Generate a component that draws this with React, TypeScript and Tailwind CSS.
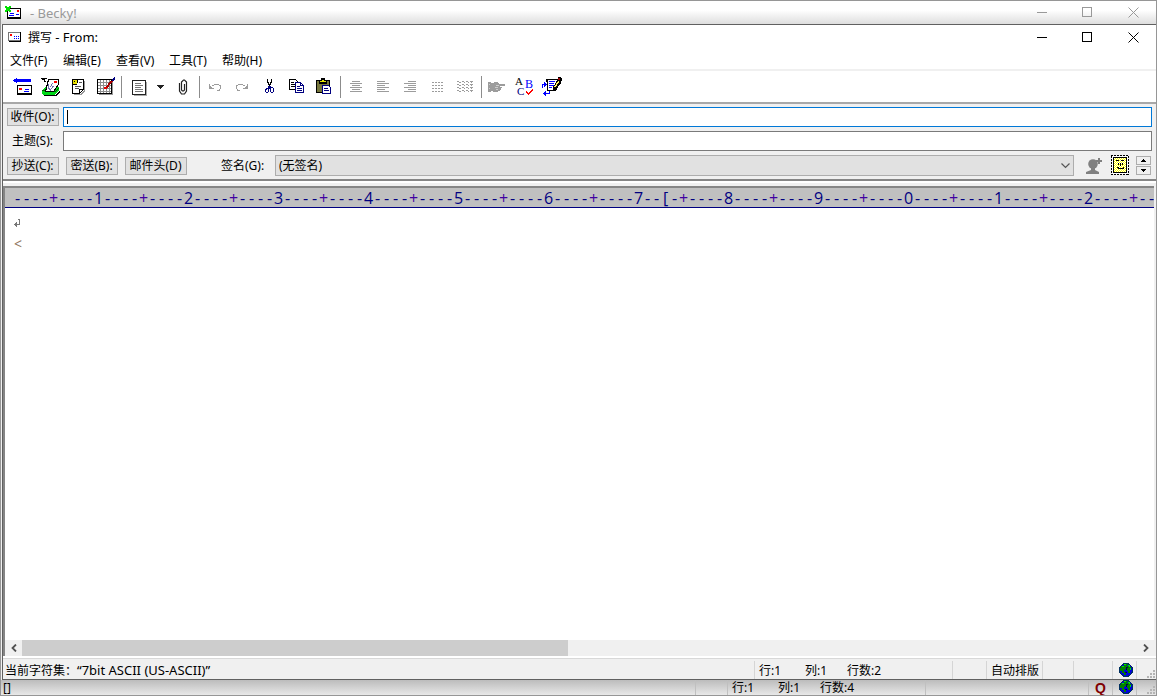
import type { ReactNode } from "react";

const BLUE = "#0000ff";
const NAVY = "#000080";
const GRAY = "#9c9c9c";

function Icon({ children }: { children: ReactNode }) {
  return (
    <svg width="21" height="21" viewBox="0 0 21 21" fill="none" shapeRendering="crispEdges" aria-hidden="true">
      {children}
    </svg>
  );
}

function Tool({ label, children }: { label: string; children: ReactNode }) {
  return (
    <button type="button" aria-label={label} title={label} className="flex h-[31px] w-[27px] shrink-0 items-center justify-center">
      <Icon>{children}</Icon>
    </button>
  );
}

function Sep() {
  return (
    <span className="flex h-[22px] w-[6px] shrink-0 justify-center">
      <span className="w-px bg-[#8c8c8c]" />
    </span>
  );
}

function MailIcon({ badge }: { badge?: boolean }) {
  return (
    <svg width="18" height="14" viewBox="0 0 18 14" shapeRendering="crispEdges" aria-hidden="true">
      {badge ? (
        <>
          <path d="M2 2h14v11H2z" fill="#000" />
          <path d="M3 3h12v8H3z" fill="#fff" />
          <path d="M12 4h2v2h-2z" fill="#f00" />
          <path d="M5 7h4v1H5zM4 9h5v1H4zM11 8h3v1h-3z" fill={BLUE} />
          <path d="M0 0h2v1h2V0h2v2H5v2h1v2H4V5H2v1H0V4h1V2H0z" fill="#00e000" />
        </>
      ) : (
        <>
          <path d="M2 2h12v9H2z" fill="#777" />
          <path d="M3 3h11v7H3z" fill="#fff" />
          <path d="M14 2h1v9h-1zM3 11h12v1H3z" fill="#000" />
          <path d="M4 4h2v2H4z" fill="#f00" />
          <path d="M8 6h1v1h-1zM10 6h1v1h-1zM12 6h1v1h-1zM8 8h1v1h-1zM10 8h1v1h-1zM12 8h1v1h-1z" fill={BLUE} />
        </>
      )}
    </svg>
  );
}

function WindowButtons({ color }: { color: string }) {
  return (
    <div className={`ml-auto flex ${color}`}>
      <button type="button" aria-label="最小化" className="flex h-6 w-[46px] items-center justify-center">
        <svg width="11" height="11" viewBox="0 0 11 11" stroke="currentColor" shapeRendering="crispEdges"><path d="M0 5.500h10" /></svg>
      </button>
      <button type="button" aria-label="最大化" className="flex h-6 w-[45px] items-center justify-center">
        <svg width="11" height="11" viewBox="0 0 11 11" fill="none" stroke="currentColor" shapeRendering="crispEdges"><path d="M.5.5h9v9h-9z" /></svg>
      </button>
      <button type="button" aria-label="关闭" className="flex h-6 w-[46px] items-center justify-center">
        <svg width="11" height="11" viewBox="0 0 11 11" stroke="currentColor"><path d="M.5.5l10 10M10.500.5l-10 10" /></svg>
      </button>
    </div>
  );
}

function SmallButton({ children, width }: { children: ReactNode; width: string }) {
  return (
    <button type="button" className={`flex h-[18px] shrink-0 items-center justify-center whitespace-nowrap border border-[#adadad] bg-[#e1e1e1] pr-px ${width}`}>
      {children}
    </button>
  );
}

function Globe() {
  return (
    <svg width="14" height="14" viewBox="0 0 14 14" shapeRendering="crispEdges" aria-hidden="true">
      <circle cx="7" cy="7" r="6.500" fill="#0000e0" stroke="#003060" />
      <path d="M2 3h3v-2h4l-1 2h2v1h2v3h-1v3h-2v-2h-1v-2h-2l-1 2v1h2v3h-2v-2h-2v-2h-2z" fill="#008000" />
      <path d="M5 1h2v1h-2zM3 3h2v1h-2zM9 2h2v2h-1v-1h-1zM11 5h1v2h-1z" fill="#00e800" />
      <path d="M7 4h2v1h-1v2h-1zM6 9h2v1h-2z" fill="#000050" />
    </svg>
  );
}

function Grip() {
  return (
    <svg width="10" height="10" viewBox="0 0 10 10" fill="#b4b4b4" shapeRendering="crispEdges" aria-hidden="true">
      <path d="M7 1h2v2h-2zM4 4h2v2h-2zM7 4h2v2h-2zM1 7h2v2h-2zM4 7h2v2h-2zM7 7h2v2h-2z" />
    </svg>
  );
}

const menus = ["文件(F)", "编辑(E)", "查看(V)", "工具(T)", "帮助(H)"];

const columns = Array.from({ length: 127 }, (_, i) => {
  if (i === 72) return "[";
  const n = i + 1;
  if (n % 10 === 0) return String((n / 10) % 10);
  return n % 5 === 0 ? "+" : "-";
});

const waves = [5, 8, 11, 14];

export default function App() {
  return (
    <div className="flex h-screen min-h-80 flex-col overflow-hidden border border-[#969696] bg-[#f0f0f0] text-[12px] leading-[16px] text-black [font-family:'Noto_Sans','Noto_Sans_CJK_SC',sans-serif]">
      <header className="flex h-[23px] shrink-0 items-center bg-linear-to-b from-white from-40% to-[#dedede] pl-1 text-[#999999]">
        <MailIcon badge />
        <span className="ml-[7px] pt-px text-[13px]">- Becky!</span>
        <WindowButtons color="text-[#999999]" />
      </header>

      <main className="ml-px flex min-h-0 flex-1 flex-col border border-r-0 border-[#606060] bg-[#f0f0f0]">
        <div className="flex h-6 shrink-0 items-center bg-white pl-[3px]">
          <MailIcon />
          <h1 className="ml-1 pt-px">撰写 <span className="text-[13px]">- From:</span></h1>
          <WindowButtons color="text-black" />
        </div>
        <nav className="flex h-5 shrink-0 items-end gap-[14px] bg-white pl-[7px]">
          {menus.map((m) => (
            <button type="button" key={m} className="w-[39px] whitespace-nowrap text-left">{m}</button>
          ))}
        </nav>

        <div className="flex h-[35px] shrink-0 items-center border-y-2 border-t-[#f0f0f0] border-b-[#a8a8a8] bg-white pl-[7px]" role="toolbar">
          <Tool label="发送">
            <path d="M0 4h1v1H0zM1 3h3v3H1zM3 2h1v5H3zM4 3h14v3H4z" fill={BLUE} />
            <path d="M4 9h15v10H4z" fill="#000" />
            <path d="M5 10h13v7H5z" fill="#fff" />
            <path d="M6 12h3v2H6z" fill="#f00" />
            <path d="M12 13h4v1h-4zM11 15h5v1h-5z" fill={BLUE} />
          </Tool>
          <Tool label="收信">
            <path d="M3 19h13l4-5v2l-4 4H4z" fill="#000" />
            <path d="M2 14l4-3h13v3l-4 5H3l-1-2z" fill="#00d818" />
            <path d="M2 14h4v1H2zM14 15h1l4-4v1l-4 5z" fill="#006000" />
            <path d="M8.500 3.500h10v5l-5 7h-8z" fill="#fff" stroke="#000" />
            <path d="M14 5h3v2h-3z" fill="#f00" />
            <path d="M8.500 8v4l2 2 3-4M12.500 7l-2 4" stroke="#7070b0" />
            <path d="M1 2h6v1H5v2h1v1H4V4H2V3H1z" fill="#000" />
          </Tool>
          <Tool label="模板">
            <path d="M7 19v-1h6l4-4V5h1v10l-4 4z" fill="#999" />
            <path d="M5.500 3.500h11v10l-4 4h-7z" fill="#fff" stroke="#000" />
            <path d="M12.500 17v-3.500h4" stroke="#000" />
            <path d="M6 4h4v4H6z" fill="#e8e000" />
            <path d="M5 3h5v1H5zM10 4h1v3h-1zM6 8h4v1H6zM7 5h1v1H7z" fill="#000" />
            <path d="M12 6.500h3M8 10.500h6M8 12.500h4" stroke="#555" />
          </Tool>
          <Tool label="日程">
            <path d="M5 18h13V5h1v14H5z" fill="#999" />
            <path d="M3.500 3.500h14v14h-14z" fill="#fff" stroke="#000" />
            <path d="M6.500 4v13M9.500 4v13M12.500 4v13M15.500 4v13M4 6.500h13M4 9.500h13M4 12.500h13M4 15.500h13" stroke="#8c8c8c" />
            <path d="m11 13 7-8" stroke="#a80000" strokeWidth="2" />
            <path d="m18 5 3-3" stroke={NAVY} strokeWidth="2" />
            <path d="M10 11h3v2h-3z" fill="#e00000" />
          </Tool>
          <Sep />
          <Tool label="格式">
            <path d="M7 19h12V6" stroke="#aaa" />
            <path d="M5.500 4.500h13v14h-13z" fill="#fff" stroke="#222" />
            <path d="M8 7.500h6M8 9.500h8M8 11.500h6M8 13.500h8M8 15.500h8" stroke="#777" />
          </Tool>
          <button type="button" aria-label="更多格式" className="flex h-[31px] w-[18px] items-center justify-center">
            <svg width="8" height="4" viewBox="0 0 8 4" shapeRendering="crispEdges"><path d="M0 0h8L4 4z" fill="#222" /></svg>
          </button>
          <Tool label="附件">
            <path d="M7.500 7v8l2 3h3l2-3V6l-2-2h-1l-2 2v8l1 1h1l1-1V8" stroke="#222" shapeRendering="auto" strokeWidth="1.200" />
          </Tool>
          <Sep />
          <Tool label="撤销">
            <path d="M4 8v5h5v-1H7v-1H6v-1H5V8zM7 9h2V8h5v1h2v4h-1v2h-3v-1h2v-1h1v-3h-1V9H9v1H7z" fill={GRAY} />
          </Tool>
          <Tool label="重做">
            <path d="M16 8v5h-5v-1h2v-1h1v-1h1V8zM13 9h-2V8H6v1H4v4h1v2h3v-1H6v-1H5v-3h1V9h5v1h2z" fill={GRAY} />
          </Tool>
          <Tool label="剪切">
            <path d="M8 3h1v3h1v2h1V6h1V3h1v4h-1v2h-1v2h-1V9H9V7H8z" fill="#000" />
            <path d="M9 10h3v1h2v1h1v4h-1v1h-2v-1h-1v-3h-1v3H9v1H7v-1H6v-3h1v-1h2zM9 13H8v1H7v2h2zM12 12v4h2v-4z" fill={NAVY} fillRule="evenodd" />
          </Tool>
          <Tool label="复制">
            <path d="M3.500 3.500h6l3 3v7h-9z" fill="#fff" stroke="#000" />
            <path d="M5 6.500h3M5 8.500h4M5 10.500h4" stroke="#000" />
            <path d="M9.500 6.500h5l3 3v7h-8z" fill="#fff" stroke={NAVY} />
            <path d="M14.500 6v3.500h3M11 10.500h3M11 12.500h5M11 14.500h5" stroke={NAVY} />
          </Tool>
          <Tool label="粘贴">
            <path d="M3.500 4.500h13v12h-13z" fill="#77773c" stroke="#000" />
            <path d="M6 4h2V2h4v2h2v4H6z" fill="#000" />
            <path d="M7 5h2V4h2v1h2v1H7z" fill="#e8e800" />
            <path d="M9.500 9.500h6l2 2v6h-8z" fill="#fff" stroke={NAVY} />
            <path d="M11 12.500h4M11 14.500h5" stroke={NAVY} />
          </Tool>
          <Sep />
          <Tool label="居中">
            <path d="M6 5.500h8M4 7.500h12M6 9.500h8M4 11.500h12M6 13.500h8M4 15.500h12" stroke={GRAY} />
          </Tool>
          <Tool label="左对齐">
            <path d="M4 5.500h8M4 7.500h12M4 9.500h8M4 11.500h12M4 13.500h8M4 15.500h12" stroke={GRAY} />
          </Tool>
          <Tool label="右对齐">
            <path d="M8 5.500h8M4 7.500h12M8 9.500h8M4 11.500h12M8 13.500h8M4 15.500h12" stroke={GRAY} />
          </Tool>
          <Tool label="分栏">
            <path d="M5 6.500h11M5 9.500h11M5 12.500h11M5 15.500h11" stroke={GRAY} strokeDasharray="2 1" />
          </Tool>
          <Tool label="重排">
            {waves.map((y) => (
              <path key={y} d={`M3 ${y}h2v1h-2zM5 ${y + 1}h2v1h-2zM8 ${y}h2v1h-2zM10 ${y + 1}h1v1h-1zM12 ${y}h2v1h-2zM14 ${y + 1}h1v1h-1zM16 ${y}h3v1h-3zM17 ${y + 1}h1v1h-1z`} fill={GRAY} />
            ))}
          </Tool>
          <Sep />
          <Tool label="引用">
            <path d="M1 6h3v1h3V6h4v1h1v1h6v2h-5v1h2v1h-1v2h-1v1h-2v1H6v-1H4v1H1z" fill={GRAY} />
            <path d="M2 8h1v1H2zM2 12h1v1H2zM9 9h3v1H9zM8 11h3v1H8zM9 13h2v1H9z" fill="#ccc" />
          </Tool>
          <Tool label="拼写检查">
            <text x="1" y="9" fontSize="11" fontFamily="Liberation Serif" fill="#000">A</text>
            <text x="11" y="12" fontSize="12" fontFamily="Liberation Serif" fill={BLUE}>B</text>
            <text x="3" y="19" fontSize="11" fontFamily="Liberation Serif" fill={NAVY}>C</text>
            <path d="M12 15h1v1h1v1h1v-1h1v-1h1v-1h1v-1h1v2h-1v1h-1v1h-1v1h-1v1h-1v-1h-1v-1h-1z" fill="#f00" />
          </Tool>
          <Tool label="外部编辑器">
            <path d="M5 3h12v9h-1v2h-1v1H6V6H5z" fill="#000" />
            <path d="M7 4h9v7l-2 3H7z" fill="#fff" />
            <path d="M8 5h6v1H8zM8 7h5v1H8zM8 9h5v1H8zM8 11h3v1H8z" fill={BLUE} />
            <path d="M17 1h3v1h1v3h-1v2l-6 7h-2v-3l5-8z" fill="#000" />
            <path d="m13 11 4-6 1 1-4 6z" fill="#fff060" />
            <path d="M17 2h2v2h-2z" fill="#900000" />
            <path d="M1 8h2V6h1v1h1v1h1v1H5v1H4v1H3V9H2v3H1zM8 15h1v3H5v2H4v-1H3v-1H2v-1h1v-1h1v-1h1v2h3z" fill={BLUE} />
          </Tool>
        </div>

        <form className="flex shrink-0 flex-col gap-1 py-[3px] pl-1 pr-1" onSubmit={(e) => e.preventDefault()}>
          <div className="flex h-5 items-center gap-1">
            <SmallButton width="w-[52px]">收件(O):</SmallButton>
            <span className="relative flex h-5 min-w-0 flex-1">
              <input aria-label="收件" className="h-5 w-full border border-[#0078d7] bg-white px-[3px] outline-none" />
              <span className="absolute left-1 top-[3px] h-[14px] w-px bg-black" />
            </span>
          </div>
          <div className="flex h-5 items-center gap-1">
            <label htmlFor="subject" className="w-[52px] shrink-0 pr-px text-center">主题(S):</label>
            <input id="subject" className="h-5 min-w-0 flex-1 border border-[#7a7a7a] bg-white px-[3px] outline-none" />
          </div>
          <div className="flex h-[21px] items-center">
            <SmallButton width="w-[52px]">抄送(C):</SmallButton>
            <span className="w-[7px]" />
            <SmallButton width="w-[52px]">密送(B):</SmallButton>
            <span className="w-[7px]" />
            <SmallButton width="w-[62px]">邮件头(D)</SmallButton>
            <label htmlFor="signature" className="ml-[34px] w-[54px] shrink-0">签名(G):</label>
            <span className="grid h-[21px] min-w-0 flex-1 items-center">
              <select id="signature" className="col-start-1 row-start-1 h-[21px] w-full appearance-none border border-[#adadad] bg-[#e1e1e1] pl-[3px]">
                <option>(无签名)</option>
              </select>
              <svg width="9" height="6" viewBox="0 0 9 6" fill="none" stroke="#555" className="pointer-events-none col-start-1 row-start-1 mr-1 justify-self-end"><path d="m.5.5 4 4 4-4" strokeWidth="1.200" /></svg>
            </span>
            <button type="button" aria-label="添加联系人" className="ml-3">
              <svg width="17" height="17" viewBox="0 0 17 17" fill="#808080"><circle cx="7" cy="7" r="4.800" /><path d="M5 11h4v2l4 2v2H0v-2l5-2zM12 1h2v2h2v2h-2v2h-2V5h-2V3h2z" /></svg>
            </button>
            <button type="button" aria-label="头像" className="ml-[7px]">
              <svg width="19" height="21" viewBox="0 0 19 21" shapeRendering="crispEdges" fill="none">
                <defs>
                  <pattern id="dither" width="2" height="2" patternUnits="userSpaceOnUse">
                    <path d="M0 0h2v2H0z" fill="#fff" />
                    <path d="M0 0h1v1H0zM1 1h1v1H1z" fill="#ffff00" />
                  </pattern>
                </defs>
                <path d="M2 1h16v18H2z" fill="#fff" />
                <path d="M1 .5h17M1 19.500h17M1.500 1v19M18.500 1v19" stroke="#000" strokeDasharray="2 1" />
                <path d="M3 2h14v16H3z" fill="#000" />
                <path d="M4 3h12v14H4z" fill="url(#dither)" />
                <path d="M6 5.500h3M11 5.500h3M8.500 8v2M12.500 8v2M10.500 8v3M7 12.500h1v1h5v-1h1" stroke="#000" />
              </svg>
            </button>
            <span className="ml-[7px] mr-px flex flex-col gap-px">
              <button type="button" aria-label="上" className="flex h-[9px] w-[15px] items-center justify-center border border-[#adadad]">
                <svg width="5" height="3" viewBox="0 0 5 3" shapeRendering="crispEdges"><path d="M2 0h1v1h1v1h1v1H0V2h1V1h1z" /></svg>
              </button>
              <button type="button" aria-label="下" className="flex h-[9px] w-[15px] items-center justify-center border border-[#adadad]">
                <svg width="5" height="3" viewBox="0 0 5 3" shapeRendering="crispEdges"><path d="M2 3h1V2h1V1h1V0H0v1h1v1h1z" /></svg>
              </button>
            </span>
          </div>
        </form>

        <div className="h-1 shrink-0 border-t-2 border-[#858585] bg-white" />
        <div className="h-[3px] shrink-0" />
        <section className="mr-[2px] flex min-h-0 flex-1 flex-col border-l-2 border-t-2 border-[#858585] bg-white">
          <div className="flex h-5 shrink-0 overflow-hidden border-b border-[#000080] bg-[#c0c0c0] pl-2 text-[16px] leading-[20px] text-[#000080] [font-family:'Open_Sans','Noto_Sans',sans-serif]" aria-label="标尺">
            {columns.map((c, i) => (
              <span key={i} className={c === "+" ? "flex w-[9px] shrink-0 justify-center text-[#4000a0]" : "flex w-[9px] shrink-0 justify-center"}>{c}</span>
            ))}
          </div>
          <div className="min-h-0 flex-1 pl-2 pt-[6px] text-[#808080]">
            <div className="flex h-5 items-center pb-1">
              <svg width="8" height="9" viewBox="0 0 8 9" fill="none" stroke="#777" shapeRendering="crispEdges"><path d="M6.500 1v5.500H1M3.500 4v5M2.500 5v3M5 1.500h2" /></svg>
            </div>
            <div className="h-5 pl-px text-[14px] leading-[20px] text-[#907860]">&lt;</div>
          </div>
          <div className="flex h-4 shrink-0 items-center bg-[#f0f0f0]">
            <button type="button" aria-label="向左滚动" className="flex h-4 w-[17px] items-center justify-center">
              <svg width="6" height="8" viewBox="0 0 6 8" fill="none" stroke="#505050" strokeWidth="1.800"><path d="M5 .5 1.500 4 5 7.500" /></svg>
            </button>
            <div className="flex h-4 flex-1"><div className="w-[49%] bg-[#cdcdcd]" /></div>
            <button type="button" aria-label="向右滚动" className="flex h-4 w-[17px] items-center justify-center">
              <svg width="6" height="8" viewBox="0 0 6 8" fill="none" stroke="#505050" strokeWidth="1.800"><path d="M1 .5 4.500 4 1 7.500" /></svg>
            </button>
          </div>
        </section>
        <div className="h-[3px] shrink-0 border-b border-[#d8d8d8] bg-white" />
        <footer className="flex h-5 shrink-0 items-end">
          <span className="min-w-0 flex-1 whitespace-nowrap pl-[2px]">当前字符集：<span className="text-[13px]">“7bit ASCII (US-ASCII)”</span></span>
          <span className="flex h-[18px] w-[198px] items-end border-l border-[#d5d5d5] pl-1"><span className="w-[46px]">行:1</span><span className="w-[42px]">列:1</span><span>行数:2</span></span>
          <span className="h-[18px] w-[34px] border-l border-[#d5d5d5]" />
          <span className="flex h-[18px] w-[56px] items-end whitespace-nowrap border-l border-[#d5d5d5] pl-1">自动排版</span>
          <span className="h-[18px] w-[31px] border-l border-[#d5d5d5]" />
          <span className="h-[18px] w-[39px] border-l border-[#d5d5d5]" />
          <span className="flex h-[18px] w-6 items-center justify-end border-l border-[#d5d5d5] pr-[3px]"><Globe /></span>
          <span className="flex h-[18px] w-5 items-end justify-end border-l border-[#d5d5d5]"><Grip /></span>
        </footer>
      </main>

      <footer className="flex h-[15px] shrink-0 items-center bg-linear-to-b from-[#bcbcbc] to-[#e8e8e8] leading-[15px]">
        <span className="flex-1 pl-[2px]">[]</span>
        <span className="h-[15px] w-8 border-l border-[#c0c0c0]" />
        <span className="flex h-[15px] w-[198px] items-center border-l border-[#c0c0c0] pl-1"><span className="w-[46px]">行:1</span><span className="w-[42px]">列:1</span><span>行数:4</span></span>
        <span className="h-[15px] w-[163px] border-l border-[#c0c0c0]" />
        <span className="flex h-[15px] w-6 items-center justify-center border-l border-[#c0c0c0] text-[14px] font-bold leading-[14px] text-[#800000] [font-family:'Liberation_Sans',sans-serif]">Q</span>
        <span className="flex h-[15px] w-6 items-start justify-end border-l border-[#c0c0c0] pr-[3px]"><Globe /></span>
        <span className="flex h-[15px] w-5 items-end justify-end border-l border-[#c0c0c0]"><Grip /></span>
      </footer>
    </div>
  );
}
